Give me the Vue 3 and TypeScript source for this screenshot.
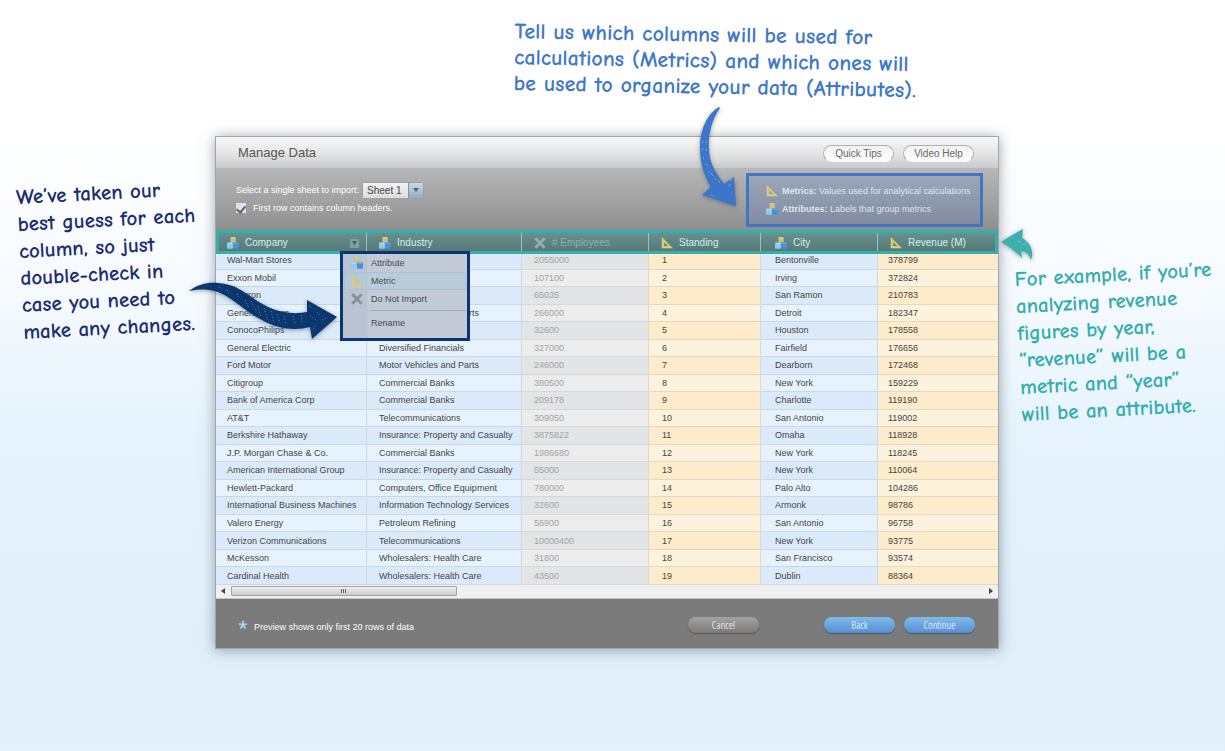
<script setup lang="ts">
type Kind = 'attribute' | 'metric' | 'skip'
interface Column { title: string; kind: Kind; cls: string }

const columns: Column[] = [
  { title: 'Company', kind: 'attribute', cls: 'c1' },
  { title: 'Industry', kind: 'attribute', cls: 'c2' },
  { title: '# Employees', kind: 'skip', cls: 'c3' },
  { title: 'Standing', kind: 'metric', cls: 'c4' },
  { title: 'City', kind: 'attribute', cls: 'c5' },
  { title: 'Revenue (M)', kind: 'metric', cls: 'c6' },
]

const rows: string[][] = [
  ['Wal-Mart Stores', '', '2055000', '1', 'Bentonville', '378799'],
  ['Exxon Mobil', '', '107100', '2', 'Irving', '372824'],
  ['Chevron', '', '65035', '3', 'San Ramon', '210783'],
  ['General Motors', 'Motor Vehicles and Parts', '266000', '4', 'Detroit', '182347'],
  ['ConocoPhilips', '', '32600', '5', 'Houston', '178558'],
  ['General Electric', 'Diversified Financials', '327000', '6', 'Fairfield', '176656'],
  ['Ford Motor', 'Motor Vehicles and Parts', '246000', '7', 'Dearborn', '172468'],
  ['Citigroup', 'Commercial Banks', '380500', '8', 'New York', '159229'],
  ['Bank of America Corp', 'Commercial Banks', '209178', '9', 'Charlotte', '119190'],
  ['AT&T', 'Telecommunications', '309050', '10', 'San Antonio', '119002'],
  ['Berkshire Hathaway', 'Insurance: Property and Casualty', '3875822', '11', 'Omaha', '118928'],
  ['J.P. Morgan Chase & Co.', 'Commercial Banks', '1986680', '12', 'New York', '118245'],
  ['American International Group', 'Insurance: Property and Casualty', '55000', '13', 'New York', '110064'],
  ['Hewlett-Packard', 'Computers, Office Equipment', '780000', '14', 'Palo Alto', '104286'],
  ['International Business Machines', 'Information Technology Services', '32600', '15', 'Armonk', '98786'],
  ['Valero Energy', 'Petroleum Refining', '56900', '16', 'San Antonio', '96758'],
  ['Verizon Communications', 'Telecommunications', '10000400', '17', 'New York', '93775'],
  ['McKesson', 'Wholesalers: Health Care', '31800', '18', 'San Francisco', '93574'],
  ['Cardinal Health', 'Wholesalers: Health Care', '43500', '19', 'Dublin', '88364'],
]
</script>

<template>
  <svg class="defs" aria-hidden="true">
    <symbol id="i-attribute" viewBox="0 0 12 12">
      <rect x="3.4" y="0" width="5.4" height="5.8" rx="0.8" fill="#cdc277" />
      <path d="M4.2 .9h3.8" stroke="#e0d894" />
      <rect x="0" y="5.5" width="6" height="6.2" rx="0.8" fill="#8ccbee" />
      <path d="M.8 6.4h4.4" stroke="#b4def4" />
      <rect x="6" y="5.5" width="6" height="6.2" rx="0.8" fill="#4a90d8" />
      <path d="M6.8 6.4h4.4" stroke="#6eaeea" />
    </symbol>
    <symbol id="i-metric" viewBox="0 0 12 12">
      <path fill-rule="evenodd" d="M.8 0 12 11.3H.8zM3.2 5.4v3.7h3.9z" fill="#d6c77a" />
      <path d="M1.4 1.5v9.2h9" fill="none" stroke="#e6db98" stroke-width=".7" stroke-dasharray="1 .7" />
    </symbol>
    <symbol id="i-skip" viewBox="0 0 12 12">
      <path d="M2.3 2.3l7.4 7.4M9.7 2.3 2.3 9.7" stroke="currentColor" stroke-width="2.8" stroke-linecap="square" />
    </symbol>
  </svg>

  <main class="stage">
    <p class="note note-top">Tell us which columns will be used for<br />calculations (Metrics) and which ones will<br />be used to organize your data (Attributes).</p>
    <p class="note note-left">We’ve taken our<br />best guess for each<br />column, so just<br />double-check in<br />case you need to<br />make any changes.</p>

    <section class="dialog" aria-labelledby="title">
      <header class="head">
        <h1 id="title">Manage Data</h1>
        <button type="button" class="pill">Quick Tips</button>
        <button type="button" class="pill">Video Help</button>
      </header>

      <div class="tools">
        <div class="options">
          <div class="line">
            <label for="sheet">Select a single sheet to import:</label>
            <span class="picker">
              <select id="sheet"><option>Sheet 1</option></select>
              <span class="picker-btn"><svg viewBox="0 0 6 4"><path d="M0 0h6L3 4z" fill="#526577" /></svg></span>
            </span>
          </div>
          <label class="line check">
            <input type="checkbox" checked />
            <span>First row contains column headers.</span>
          </label>
        </div>
        <div class="legend">
          <p><svg class="ico"><use href="#i-metric" /></svg><span><b>Metrics:</b> Values used for analytical calculations</span></p>
          <p><svg class="ico"><use href="#i-attribute" /></svg><span><b>Attributes:</b> Labels that group metrics</span></p>
        </div>
      </div>

      <div class="sheet">
        <table>
          <colgroup><col v-for="c in columns" :key="c.cls" :class="c.cls" /></colgroup>
          <thead>
            <tr>
              <th v-for="c in columns" :key="c.title" scope="col" :class="c.kind">
                <span class="th">
                  <svg class="ico"><use :href="'#i-' + c.kind" /></svg>
                  <span>{{ c.title }}</span>
                  <button v-if="c.cls === 'c1'" type="button" class="drop" aria-label="Column options">
                    <svg viewBox="0 0 6 4"><path d="M0 0h6L3 4z" fill="#345a58" /></svg>
                  </button>
                </span>
              </th>
            </tr>
          </thead>
          <tbody>
            <tr v-for="row in rows" :key="row[0]">
              <td v-for="(cell, i) in row" :key="i" :class="columns[i].kind">{{ cell }}</td>
            </tr>
          </tbody>
        </table>
        <div class="frame"></div>
        <div class="menu" role="menu">
          <button type="button" role="menuitem"><svg class="ico"><use href="#i-attribute" /></svg><span>Attribute</span></button>
          <button type="button" role="menuitem" class="on"><svg class="ico"><use href="#i-metric" /></svg><span>Metric</span></button>
          <button type="button" role="menuitem"><svg class="ico gray"><use href="#i-skip" /></svg><span>Do Not Import</span></button>
          <hr />
          <button type="button" role="menuitem"><i class="ico"></i><span>Rename</span></button>
        </div>
      </div>

      <div class="scroll">
        <svg class="tip" viewBox="0 0 4 6"><path d="M4 0v6L0 3z" /></svg>
        <div class="track"><div class="thumb"><i></i><i></i><i></i></div></div>
        <svg class="tip" viewBox="0 0 4 6"><path d="M0 0v6l4-3z" /></svg>
      </div>

      <footer class="foot">
        <svg class="star" viewBox="0 0 10 10"><path d="M5 .8V5M5 5 1 3.8M5 5l4-1.2M5 5 2.5 8.6M5 5l2.5 3.6" stroke="#a9d0f5" stroke-width="1.8" /></svg>
        <p>Preview shows only first 20 rows of data</p>
        <button type="button" class="btn cancel">Cancel</button>
        <button type="button" class="btn">Back</button>
        <button type="button" class="btn">Continue</button>
      </footer>

      <svg class="arrow arrow-top" viewBox="0 0 36 99">
        <path d="M19 0C8 6 0 22 0 40c0 16 4 28 10 38v3L2 88l34 11-2-29-10 7C15 66 9 54 9 42 8 27 12 12 20 1z" fill="#3b76c8" />
        <path d="M2 34l1 2M6 34l1 2M2 41l1 2M6 42l1 2M3 50l1 2M5 57l3 2M8 64l2 2M11 66l2 3M14 71l2 2M18 73l2 3M30 74l2-2M28 79l3-2M11 88l2 1" stroke="#83a9dd" stroke-width=".8" />
      </svg>
      <svg class="arrow arrow-left" viewBox="0 0 148 58">
        <path d="M0 9C9 2 20 0 29 1c17 1 26 9 35 15 15 11 34 18 54 14V18l30 17-25 22-2-12c-16 4-32 2-48-7-15-8-23-16-34-23C27 7 13 6 0 9z" fill="#0b376f" />
        <path d="M30 5l3 2M38 8l2 3M48 12l2 3M56 18l4 8M62 19l5 10M69 24l3 11M75 26l4 12M82 29l3 12M88 32l3 9M95 34l2 9M104 34l2 8M112 33l1 8M120 24l3 2M121 34l6 4M128 30l3 3M124 47l3-4M133 38l5-2" stroke="#6d8db5" stroke-width=".8" stroke-dasharray="1.2 1.8" />
      </svg>
      <svg class="arrow arrow-right" viewBox="0 0 34 34">
        <path d="M1 14C8 9 16 5 23 1l-1 9c9 5 12 14 9 22-2-6-5-9-10-9l1 7C16 24 9 18 1 14z" fill="#3bb0ae" />
        <path d="M18 13l3 1M22 16l2 1M25 14l1 3" stroke="#8bd0ce" stroke-width=".6" />
      </svg>
    </section>

    <p class="note note-right">For example, if you’re<br />analyzing revenue<br />figures by year,<br />“revenue” will be a<br />metric and “year”<br />will be an attribute.</p>
  </main>
</template>

<style>
body { background: #e4f1fb; }
</style>

<style scoped>
* { box-sizing: border-box; }
p, h1 { margin: 0; font-weight: normal; }
svg { display: block; }
button { font: inherit; border: 0; padding: 0; color: inherit; }
.defs { position: absolute; width: 0; height: 0; }
.stage {
  display: grid;
  grid-template-columns: 215px minmax(0, 1fr) 226px;
  grid-template-rows: 136px auto;
  min-height: 100vh;
  align-items: start;
  font: 9px/12px "Liberation Sans", Arial, sans-serif;
  background: linear-gradient(#fff 0, #fff 130px, #f5faff 300px, #e6f3fc 430px, #e0effa 650px, #e4f1fb 751px);
}
.note { font-family: "Comic Neue", "Patrick Hand", Lato, cursive; font-size: 21px; font-weight: 700; line-height: 27px; white-space: nowrap; transform-origin: 0 0; }
.note-top { grid-column: 2 / 4; padding: 13px 0 0 300px; color: #3f78c8; rotate: 1deg; font-size: 22px; line-height: 26px; }
.note-left { grid-column: 1; grid-row: 2; padding: 49px 0 0 13px; color: #1d2d72; rotate: -3deg; }
.note-right { grid-column: 3; grid-row: 2; padding: 131px 0 0 8px; color: #36aeac; rotate: -3deg; }

.dialog { grid-column: 2; grid-row: 2; position: relative; border: 1px solid #a3a5a6; box-shadow: 0 1px 12px rgba(60, 75, 90, .5); background: #7b7b7b; }
.head { display: flex; align-items: center; gap: 9px; height: 31px; padding: 1px 24px 0 22px; background: linear-gradient(#f7f7f7, #e5e6e7 50%, #c9cacc); }
.head h1 { flex: 1; font-size: 13px; line-height: 16px; color: #555; }
.pill { width: 71px; height: 17px; border-radius: 9px; border: 1px solid #b0b1b3; border-bottom-color: #f4f4f4; background: linear-gradient(#f1f1f1, #fff); font-size: 10px; line-height: 15px; color: #666; }

.tools { display: flex; justify-content: space-between; align-items: flex-start; height: 62px; padding: 5px 15px 0 20px; background: linear-gradient(#b7b7b8, #8f8f90); color: #fff; }
.options { padding-top: 8px; }
.line { display: flex; align-items: center; gap: 3px; height: 18px; }
.check { gap: 7px; }
.picker { display: flex; width: 62px; height: 17px; border: 1px solid #9aa0a5; border-radius: 2px; overflow: hidden; background: #e4e5e6; }
.picker select { flex: 1; min-width: 0; appearance: none; border: 0; padding: 0 0 0 4px; background: linear-gradient(#f2f2f2, #dcdddd); color: #444; font: 10px/15px "Liberation Sans", Arial, sans-serif; }
.picker-btn { display: grid; place-items: center; width: 15px; background: linear-gradient(#c9dae7, #8eacc3); border-left: 1px solid #7b93a6; }
.picker-btn svg { width: 6px; height: 4px; }
.check input { appearance: none; width: 10px; height: 10px; margin: 0; background: #dde3e8; display: grid; place-items: center; }
.check input::after { content: ""; width: 4px; height: 7px; border: solid #5b6670; border-width: 0 2px 2px 0; rotate: 40deg; }
.legend { width: 237px; height: 54px; border: 3px solid #3f76c6; background: linear-gradient(#9ca7b9, #828ba0); padding: 6px 0 0 17px; color: #dbe6f5; white-space: nowrap; }
.legend p { display: flex; align-items: center; gap: 4px; height: 18px; }
.ico { width: 12px; height: 12px; flex: none; }

.sheet { position: relative; }
table { width: 100%; height: 355px; table-layout: fixed; border-collapse: separate; border-spacing: 0; }
.c1 { width: 151px; } .c2 { width: 155px; } .c3 { width: 127px; } .c4 { width: 112px; } .c5 { width: 117px; } .c6 { width: 120px; }
th { height: 22px; padding: 4px 0 0; text-align: left; font-weight: normal; background: linear-gradient(#6b9492, #557876); color: #d5eeec; box-shadow: inset -1px 0 #9fbfbd; }
th:last-child { box-shadow: none; }
th.skip { color: #8fb0ae; }
.th { display: flex; align-items: center; gap: 6px; height: 18px; padding: 0 8px 0 12px; font-size: 10px; }
th:first-child .th { padding-left: 11px; }
th:nth-child(5) .th { padding-left: 14px; }
.drop { margin-left: auto; width: 9px; height: 9px; display: grid; place-items: center; background: #7aa09e; }
.drop svg { width: 5px; height: 4px; }
td { padding: 0 0 0 12px; line-height: 12px; white-space: nowrap; color: #444; border-right: 1px solid #cfd8df; border-bottom: 1px solid #cbd8e3; background: #e6f3fe; }
td:first-child { padding-left: 11px; }
td:nth-child(4) { padding-left: 13px; }
td:nth-child(5) { padding-left: 14px; }
td:last-child { padding-left: 10px; border-right: 0; }
tr:nth-child(odd) td { background: #dbeafa; }
td.skip { color: #a2a2a4; background: #ececed; border-color: #d6d8da; }
tr:nth-child(odd) td.skip { background: #e3e4e6; }
td.metric { background: #fdf3dd; border-color: #dcd9cf; }
tr:nth-child(odd) td.metric { background: #fdebca; }
.frame { position: absolute; inset: 0 0 auto; height: 24px; border: 3px solid #36aeac; pointer-events: none; }

.menu { position: absolute; left: 124px; top: 21px; width: 130px; height: 90px; padding: 0 1px; border: 3px solid #0b3572; background: linear-gradient(90deg, #b9c3d1 0, #b9c3d1 23px, #a9b4c2 23px, #c2cad6 24px); color: #444b55; }
.menu button { display: flex; align-items: center; gap: 8px; width: 100%; height: 18px; padding-left: 6px; background: none; border: 1px solid transparent; text-align: left; }
.menu .on { background: rgba(180, 205, 220, .6); border-color: #a7c3d4; border-radius: 2px; }
.menu hr { margin: 2px 0 3px 26px; border: 0; border-top: 1px solid #a3afbd; }
.gray { color: #87909b; }

.scroll { display: flex; align-items: center; gap: 6px; height: 14px; padding: 0 5px 1px; background: #f0f0f0; border-bottom: 1px solid #c4c4c4; }
.tip { width: 4px; height: 6px; fill: #444; }
.track { flex: 1; height: 10px; }
.thumb { display: flex; justify-content: center; gap: 1px; width: 30%; height: 10px; padding-top: 2px; border: 1px solid #a5a5a5; border-radius: 1px; background: linear-gradient(#f0f0f0, #cacbcc); }
.thumb i { width: 1px; height: 4px; background: #666; }

.foot { display: flex; align-items: center; height: 49px; padding: 3px 23px 0 22px; color: #fff; }
.star { width: 10px; height: 10px; margin-right: 6px; }
.foot p { flex: 1; padding-top: 4px; }
.btn { width: 71px; height: 16px; border-radius: 8px; margin-left: 9px; background: linear-gradient(#80bbec, #568fd3); box-shadow: 0 1px 1px #555; font: 300 11px/16px "Liberation Sans Narrow", "Open Sans Condensed Light", "Open Sans Condensed", "DejaVu Sans Condensed", sans-serif; color: #fff; }
.cancel { margin-right: 56px; background: linear-gradient(#a5a3a2, #7c7a79); }

.arrow { position: absolute; overflow: visible; filter: drop-shadow(0 1px 2px rgba(50, 60, 75, .5)); pointer-events: none; }
.arrow-top { right: 262px; top: -30px; width: 36px; height: 99px; }
.arrow-left { left: -27px; top: 145px; width: 148px; height: 58px; }
.arrow-right { right: -36px; top: 91px; width: 34px; height: 34px; }
</style>
